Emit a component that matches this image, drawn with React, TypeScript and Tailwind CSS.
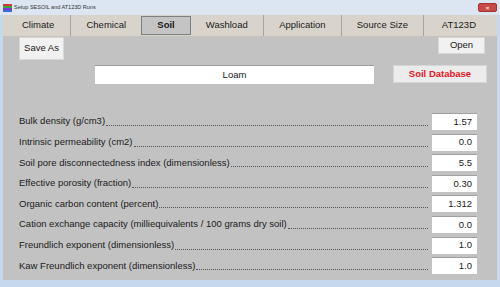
import React from 'react';

const tabs = [
  { name: 'Climate', w: 65 },
  { name: 'Chemical', w: 72 },
  { name: 'Soil', w: 50, active: true },
  { name: 'Washload', w: 73 },
  { name: 'Application', w: 79 },
  { name: 'Source Size', w: 83 },
  { name: 'AT123D', w: 72 },
];

const rows = [
  ['Bulk density (g/cm3)', '1.57'],
  ['Intrinsic permeability (cm2)', '0.0'],
  ['Soil pore disconnectedness index (dimensionless)', '5.5'],
  ['Effective porosity (fraction)', '0.30'],
  ['Organic carbon content (percent)', '1.312'],
  ['Cation exchange capacity (milliequivalents / 100 grams dry soil)', '0.0'],
  ['Freundlich exponent (dimensionless)', '1.0'],
  ['Kaw Freundlich exponent (dimensionless)', '1.0'],
];

export default function App() {
  return (
    <div className="w-[500px] h-[287px] bg-[#c6d8ec] flex flex-col overflow-hidden font-['Liberation_Sans',Arial,sans-serif] text-[#1a1a1a]">
      {/* title bar */}
      <div className="h-[15px] flex items-center bg-[#dbe6f2] px-[3px]">
        <div className="w-[9px] h-[8px] flex flex-col mr-[2px]">
          <div className="h-[2px] bg-[#d23a3a]" />
          <div className="h-[2px] bg-[#3aa83a]" />
          <div className="h-[2px] bg-[#7a3ad2]" />
          <div className="h-[2px] bg-[#3a6ad2]" />
        </div>
        <span className="text-[5.5px] text-[#333]">Setup SESOIL and AT123D Runs</span>
        <div className="ml-auto mr-[0px] w-[19px] h-[9px] rounded-[2px] bg-[#c84a48] border border-[#a03532] flex items-center justify-center text-white text-[6px] leading-none font-bold">
          ×
        </div>
      </div>

      <div className="flex-1 flex flex-col px-[3px] pb-[7px]">
        {/* tabs */}
        <div className="h-[21px] bg-[#d8d4cc] flex pl-[3px] pr-[3px]">
          {tabs.map((t, i) => (
            <div
              key={t.name}
              style={{ width: t.w }}
              className={
                t.active
                  ? 'flex items-center justify-center text-[9.5px] font-bold bg-[#c4c4c4] border border-[#7f7f7f] my-[1px]'
                  : `flex items-center justify-center text-[9.5px] ${i > 0 && !tabs[i - 1].active ? 'border-l border-[#a9a59e]' : ''}`
              }
            >
              {t.name}
            </div>
          ))}
        </div>

        {/* body */}
        <div className="flex-1 bg-[#c2c2c2] flex flex-col pl-[16px]">
          <div className="flex justify-between items-start pt-[1px]">
            <button className="w-[45px] h-[23px] bg-[#f1f1f1] border border-[#d8d8d8] text-[9.5px]">Save As</button>
            <button className="w-[47px] h-[17px] bg-[#f1f1f1] border border-[#d8d8d8] text-[9.5px] mr-[12px]">Open</button>
          </div>

          <div className="flex items-start mt-[5px]">
            <div className="ml-[76px] w-[279px] h-[19px] bg-white border-t border-[#9a9a9a] flex items-center justify-center text-[9.5px]">
              Loam
            </div>
            <button className="ml-[19px] w-[94px] h-[18px] bg-[#ececec] border border-[#d6d6d6] text-[9.5px] font-bold text-[#e8141e]">
              Soil Database
            </button>
          </div>

          <div className="flex flex-col gap-[3.6px] mt-[29px] pr-[20px]">
            {rows.map(([label, value]) => (
              <div key={label} className="flex items-center h-[17px]">
                <span className="text-[9.5px] whitespace-nowrap">{label}</span>
                <span className="flex-1 self-end mb-[4px] ml-[1px] border-b border-dotted border-[#555]" />
                <div className="ml-[4px] w-[45px] h-[17px] bg-white border-t border-[#a0a0a0] flex items-center justify-end pr-[5px] text-[9.5px]">
                  {value}
                </div>
              </div>
            ))}
          </div>
        </div>
      </div>
    </div>
  );
}
